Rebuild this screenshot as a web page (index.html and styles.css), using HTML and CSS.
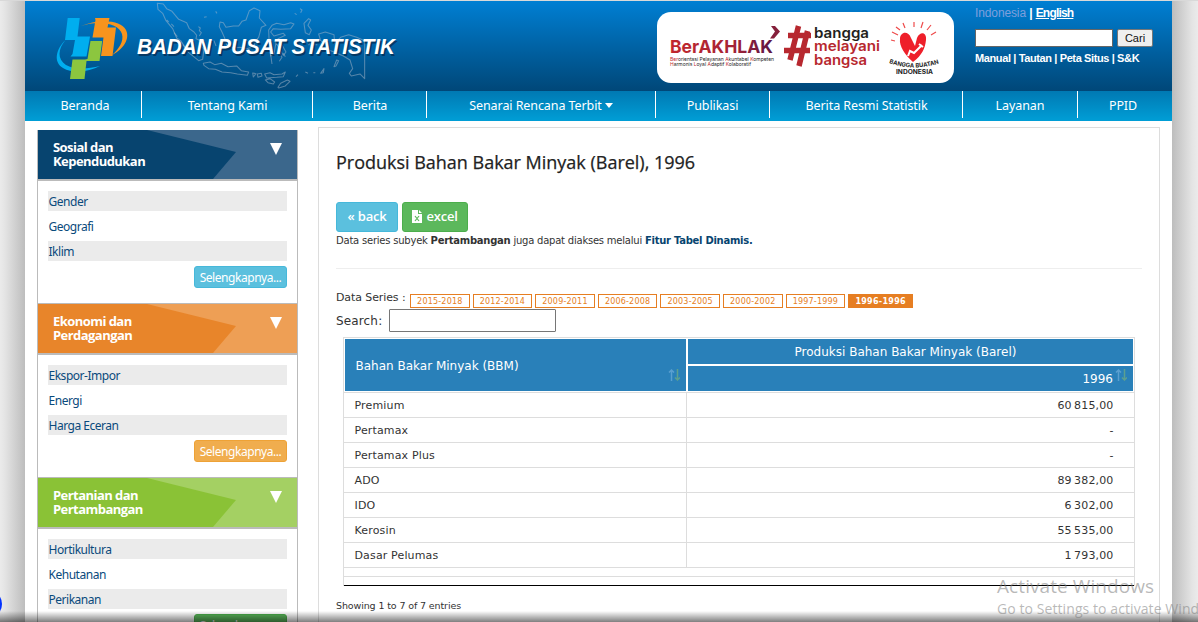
FILE: index.html
```
<!DOCTYPE html>
<html lang="id">
<head>
<meta charset="utf-8">
<title>Badan Pusat Statistik</title>
<link rel="stylesheet" href="styles.css">
</head>
<body>
<div class="page">
  <header class="header">
    <svg class="brand" width="400" height="90" viewBox="25 1 400 90">
      <g transform="translate(150 0) scale(.3333)" fill="none" stroke="#a9b9cb" stroke-opacity=".5" stroke-width="3.200" stroke-linejoin="round">
        <path d="M22 10l18 2 10 14 16 8 20 24 24 10 8 18 14 10 8 10-2 10 14 6-2 16 12 8-4 32-12 4-30-24-24-36-12-8-12-28-20-24-10-22-14-12z"/>
        <path d="M160 190l20-4 14 8 20-4 20 10 26-2 14 14 22 4-4 10-30-4-20-4-26-2-20-8-20-2-14-10zM308 219l10 2-8 10zM322 222l12-2 2 8-12 4zM344 222l16-4 12 6 24-2 10-6-6 14-20 2-30 2zM346 240l14-4 14 10-4 6-16-4zM384 262l8-12 20-10 8 4-14 14-20 6z"/>
        <path d="M210 66l10 2 8 14 22-4 16 0 10-14 12-4 10-28 14-8 18 8-2 22 20 22-14 6-8 30-8 10-8 18-20 6-20-4-20 2-20-10-6-20-8-18-8-16z"/>
        <path d="M356 90l10-14 14-6 22 4 20-6 10 4-10 14-30 2-22-2-8 10 10 12 28-8 6 6-22 10 14 22 10 18-8 10-14-24-8-14-6 34-10 6-4-30z"/>
        <path d="M462 70l14-14 6 4-8 16 10 14-6 14-12-6zM506 102l20-6 26 8 2 26 18-18 24-8 24 8 24 10v114l-14-14-26 6-6-8 10-14-8-26-20-12-22-10-22-8-4-16-20-12zM470 122l10 6-4 8M490 134l12 0"/>
        <path d="M50 60l6 6M64 72l8 8M72 98l10 12M98 134l14 16M145 80l6 4-3 8 6 6-6 10M197 34l4 6M162 52l8-2M192 122l6 16M450 26l6 4-4 8M434 40l6 4M362 164l4 28M388 158l8 14-8 12M400 160l6 10M438 230l6-6M466 216l8 4M490 218l6 0M512 220l10-14-2 12zM552 200l8-20 6 2-8 16z"/>
      </g>
      <path d="M80 26.500C99 18 121 20 126 30c5 11-6 21-14 25 7-6 12-14 10-21-3-11-25-14-42-7.500z" fill="#f7941e"/>
      <path d="M65.500 40C56 49 53 62 63 68c10 6 26 4 37-2-12 3-26 4-34-1-9-6-8-16-.5-25z" fill="#00aeef"/>
      <path d="M67.700 18h12l-2.200 18.500h12.500L86.500 56.500H70.500L72.500 54l2.500-14H65z" fill="#00aeef"/>
      <path d="M95 18h14.500l-2 9.500h8.500L112.500 56H101l2.500-18.500H92.500L95.500 20z" fill="#f7941e"/>
      <path d="M90.500 41h11.700L99.500 61H86.500L84.500 79H70l2.500-19.500h12.500L87.500 59z" fill="#8cc63f"/>
      <text class="brand-shadow" x="138.500" y="56" textLength="258" lengthAdjust="spacingAndGlyphs" aria-hidden="true">BADAN PUSAT STATISTIK</text>
      <text class="brand-name" x="137" y="54" textLength="258" lengthAdjust="spacingAndGlyphs">BADAN PUSAT STATISTIK</text>
    </svg>
    <svg class="campaign" width="297" height="71" viewBox="0 0 297 71">
      <defs><linearGradient id="maroon"><stop offset="0" stop-color="#c1272d"/><stop offset=".6" stop-color="#a62335"/><stop offset="1" stop-color="#5b1645"/></linearGradient></defs>
      <rect width="297" height="71" rx="14" fill="#fff"/>
      <text x="13" y="40.500" class="akhlak" textLength="103" lengthAdjust="spacingAndGlyphs" fill="url(#maroon)">BerAKHLAK</text>
      <path d="M114 14h4l5 5.500-6 7h-4l5-7z" fill="#85203b"/>
      <text x="13" y="48.500" class="tiny" textLength="104" lengthAdjust="spacingAndGlyphs"><tspan fill="#c1272d">Ber</tspan>orientasi Pelayanan <tspan fill="#c1272d">A</tspan>kuntabel <tspan fill="#c1272d">K</tspan>ompeten</text>
      <text x="13" y="54" class="tiny" textLength="81" lengthAdjust="spacingAndGlyphs"><tspan fill="#c1272d">H</tspan>armonis <tspan fill="#c1272d">L</tspan>oyal <tspan fill="#c1272d">A</tspan>daptif <tspan fill="#c1272d">K</tspan>olaboratif</text>
      <path d="M141.500 14L133 48M150.500 19L142 54M131 23.500h23M127 38.500h26" fill="none" stroke="#b7282f" stroke-width="5.500"/>
      <text x="157" y="25.500" class="pop" fill="#231f20" textLength="55" lengthAdjust="spacingAndGlyphs">bangga</text>
      <text x="157" y="39" class="pop" fill="#b7282f" textLength="66" lengthAdjust="spacingAndGlyphs">melayani</text>
      <text x="157" y="52.500" class="pop" fill="#b7282f" textLength="53" lengthAdjust="spacingAndGlyphs">bangsa</text>
      <path d="M256 50C248 43 242 34 243 27c0-7 8-9 11-1l4 8 2-8c3-7 10-6 9 2-1 9-4 15-13 22z" fill="#ee1f2a"/>
      <path d="M251 44l2-5 4 2 8-8M262 32l4 3" fill="none" stroke="#fff" stroke-width="2"/>
      <path d="M235 20l6 3M234 28l4 1M239 15l4 3M246 11l2 5M257 10v5M264 16l2-6M270 18l4-5M274 23l5-3" fill="none" stroke="#ee4a4a" stroke-width="1.200"/>
      <path id="arc" d="M232 51q25 9 51 0" fill="none"/>
      <text class="made" textLength="51" lengthAdjust="spacingAndGlyphs"><textPath href="#arc">BANGGA BUATAN</textPath></text>
      <text class="made" x="239" y="61.500" textLength="37" lengthAdjust="spacingAndGlyphs">INDONESIA</text>
    </svg>
    <div class="tools">
      <div class="lang"><span class="muted">Indonesia</span> <b>|</b> <b class="under">English</b></div>
      <div class="find"><input class="find-box" aria-label="Cari"><button class="find-btn">Cari</button></div>
      <div class="quick">Manual | Tautan | Peta Situs | S&amp;K</div>
    </div>
  </header>
  <nav class="nav">
    <a>Beranda</a><a>Tentang Kami</a><a>Berita</a><a>Senarai Rencana Terbit<i class="caret"></i></a><a>Publikasi</a><a>Berita Resmi Statistik</a><a>Layanan</a><a>PPID</a>
  </nav>
  <div class="body">
    <aside class="side">
      <section class="box navy">
        <h2><span>Sosial dan<br>Kependudukan</span><i class="tri"></i></h2>
        <ul><li>Gender</li><li>Geografi</li><li>Iklim</li></ul>
        <a class="more">Selengkapnya...</a>
      </section>
      <section class="box orange">
        <h2><span>Ekonomi dan<br>Perdagangan</span><i class="tri"></i></h2>
        <ul><li>Ekspor-Impor</li><li>Energi</li><li>Harga Eceran</li></ul>
        <a class="more">Selengkapnya...</a>
      </section>
      <section class="box green">
        <h2><span>Pertanian dan<br>Pertambangan</span><i class="tri"></i></h2>
        <ul><li>Hortikultura</li><li>Kehutanan</li><li>Perikanan</li></ul>
        <a class="more">Selengkapnya...</a>
      </section>
    </aside>
    <main class="main">
      <h1><span>Produksi Bahan Bakar Minyak (Barel), 1996</span></h1>
      <div class="actions">
        <a class="btn info">« back</a>
        <a class="btn success"><svg width="10" height="13" viewBox="0 0 10 13"><path d="M0 0h6v4h4v9H0zM7 0l3 3H7z" fill="#fff"/><path d="M3 6l4 5M7 6l-4 5" stroke="#5cb85c" stroke-width="1.200"/></svg>excel</a>
      </div>
      <p class="note"><span>Data series subyek <b>Pertambangan</b> juga dapat diakses melalui <b class="link">Fitur Tabel Dinamis.</b></span></p>
      <hr>
      <div class="series"><span class="label">Data Series :</span><a>2015-2018</a><a>2012-2014</a><a>2009-2011</a><a>2006-2008</a><a>2003-2005</a><a>2000-2002</a><a>1997-1999</a><a class="on">1996-1996</a></div>
      <div class="search"><label>Search:</label><input aria-label="Search"></div>
      <div class="table">
        <div class="thead">
          <div class="th first">Bahan Bakar Minyak (BBM)<svg class="sort" width="12" height="12"><path d="M3.500 12V2M1 3.500L3.500 1 6 3.500" stroke="#5a9fd0" stroke-width="1.500"/><path d="M9.500 0v10M7 8.500L9.500 11 12 8.500" stroke="#5c9f90" stroke-width="1.500"/></svg></div>
          <div class="th group">Produksi Bahan Bakar Minyak (Barel)</div>
          <div class="th year">1996<svg class="sort" width="12" height="12"><path d="M3.500 12V2M1 3.500L3.500 1 6 3.500" stroke="#5a9fd0" stroke-width="1.500"/><path d="M9.500 0v10M7 8.500L9.500 11 12 8.500" stroke="#5c9f90" stroke-width="1.500"/></svg></div>
        </div>
        <div class="row"><span>Premium</span><span>60&#8201;815,00</span></div>
        <div class="row"><span>Pertamax</span><span>-</span></div>
        <div class="row"><span>Pertamax Plus</span><span>-</span></div>
        <div class="row"><span>ADO</span><span>89&#8201;382,00</span></div>
        <div class="row"><span>IDO</span><span>6&#8201;302,00</span></div>
        <div class="row"><span>Kerosin</span><span>55&#8201;535,00</span></div>
        <div class="row"><span>Dasar Pelumas</span><span>1&#8201;793,00</span></div>
        <div class="foot"></div>
        <div class="foot last"></div>
      </div>
      <p class="info-line">Showing 1 to 7 of 7 entries</p>
    </main>
  </div>
</div>
<div class="fade"></div>
<div class="dot"></div>
<div class="watermark"><div class="wm1">Activate Windows</div><div class="wm2">Go to Settings to activate Windows.</div></div>
</body>
</html>
```
FILE: styles.css
```
* { box-sizing: border-box; }
body {
  margin: 0; height: 622px; overflow: hidden; position: relative;
  background: linear-gradient(90deg, #ebebeb 0, #e4e4e4 5px, #bdbdbd 25px, #bdbdbd 1172px, #e4e4e4 1192px, #ebebeb 1198px);
  border-top: 1px solid #d9d9d9;
  font-family: "DejaVu Sans", Verdana, sans-serif; color: #333;
}
.page { width: 1147px; height: 621px; margin-left: 25px; background: #fff; overflow: hidden; }
.header { height: 90px; display: flex; align-items: flex-start; background: linear-gradient(#007fd3, #004778); }
.brand { flex: none; }
.brand-name, .brand-shadow { font: italic bold 22px "Liberation Sans", Arial, sans-serif; fill: #fff; }
.brand-shadow { fill: #07284c; opacity: .7; }
.campaign { margin: 11px 0 0 232px; flex: none; }
.akhlak { font: bold 18px Inter, sans-serif; }
.tiny { font: 5px Inter, sans-serif; fill: #222; }
.pop { font: 600 14px Inter, sans-serif; }
.made { font: bold 6px Inter, sans-serif; fill: #222; }
.tools { margin-left: 21px; color: #fff; font-family: "Liberation Sans", Arial, sans-serif; }
.lang { font-size: 12px; line-height: 14px; margin-top: 5px; white-space: nowrap; letter-spacing: -.12px; }
.muted { color: #7f9fdc; }
.under { text-decoration: underline; font-weight: 700; letter-spacing: -.8px; }
.find { display: flex; gap: 4px; margin-top: 9px; }
.find-box { width: 138px; height: 18px; border: 1px solid #666; background: #fff; padding: 0; }
.find-btn { width: 36px; height: 18px; border: 1px solid #777; border-radius: 2px; background: #efefef; padding: 0; font: 11px "Liberation Sans", Arial, sans-serif; color: #111; }
.quick { margin-top: 4px; font-size: 11px; line-height: 14px; font-weight: 700; letter-spacing: -.38px; white-space: nowrap; }

.nav { height: 30px; display: grid; grid-template-columns: 117px 171px 114px 229px 114px 193px 115px 94px; background: linear-gradient(#0079b3, #009ed6); }
.nav a { height: 27px; border-right: 1px solid #fff; color: #fff; font: 12.500px/30px "Noto Sans", sans-serif; letter-spacing: -.08px; text-align: center; padding-left: 1px; white-space: nowrap; }
.nav a:first-child { padding-left: 4px; }
.nav a:nth-child(4), .nav a:nth-child(5), .nav a:nth-child(7) { padding-left: 0; }
.nav a:last-child { border: 0; padding: 0 4px 0 0; }
.caret { display: inline-block; border: 4.500px solid transparent; border-top: 5px solid #fff; border-bottom: 0; margin: 0 0 2px 3px; }

.body { display: flex; align-items: flex-start; }
.side { width: 261px; margin: 9px 0 0 12px; border: solid #bbb; border-width: 0 1px; }
.box { height: 174px; border-bottom: 1px solid #bbb; }
.box h2 {
  margin: 0; height: 51px; border-bottom: 2px solid #bbb; padding: 10px 15px 0 15px; display: flex; justify-content: space-between;
  font: 700 13px/14px "Open Sans", sans-serif; letter-spacing: -.55px; color: #fff; position: relative;
}
.box h2::before { content: ""; position: absolute; inset: 0; background: var(--dark); clip-path: polygon(0 0, 109px 0, 198px 22px, 175px 100%, 0 100%); }
.box h2 > * { position: relative; }
.navy h2 { background: #3b678c; --dark: #07446f; }
.orange h2 { background: #ee9f55; --dark: #e8852a; }
.green h2 { background: #a4d063; --dark: #8ac236; }
.tri { height: 0; border: 6px solid transparent; border-top: 12px solid #fff; border-bottom: 0; margin-top: 3px; }
.box ul { list-style: none; margin: 10px 10px 5px; padding: 0; display: grid; gap: 5px; }
.box li { height: 20px; font: 12px/21px "Noto Sans", sans-serif; letter-spacing: -.48px; color: #0a4a7c; padding-left: .5px; }
.box li:nth-child(odd) { background: #ebebeb; }
.more { display: block; width: 93px; height: 22px; margin-left: auto; margin-right: 10px; border-radius: 3px; border: 1px solid #46b8da; background: #5bc0de; color: #fff; font: 12px/22px "Noto Sans", sans-serif; letter-spacing: -.45px; text-align: center; white-space: nowrap; }
.orange .more { background: #f0ad4e; border-color: #eea236; }
.green .more { background: #5cb85c; border-color: #4cae4c; }

.main { width: 842px; height: 600px; margin: 6px 0 0 20px; border: 1px solid #ddd; padding: 0 17px; }
.main h1 { margin: 22px 0 0; font: 18px/24px "Open Sans", sans-serif; letter-spacing: -.01px; color: #222; -webkit-text-stroke: .25px #222; white-space: nowrap; }
.actions { display: flex; gap: 4px; margin-top: 28px; }
.btn { height: 30px; border: 1px solid; border-radius: 3px; color: #fff; font: 600 13px/27px "Open Sans", sans-serif; text-align: center; letter-spacing: -.2px; white-space: nowrap; }
.info { width: 62px; background: #5bc0de; border-color: #46b8da; }
.success { width: 66px; background: #5cb85c; border-color: #4cae4c; }
.btn svg { vertical-align: -2px; margin-right: 4px; }
.note { margin: 2px 0 0; font-size: 10px; line-height: 14px; letter-spacing: -.22px; white-space: nowrap; }
.note b { letter-spacing: -.27px; }
.link { color: #07446f; }
.main hr { border: 0; border-top: 1px solid #eee; margin: 20px 0 25px; }
.series { display: flex; height: 15px; gap: 3px; white-space: nowrap; }
.series .label { width: 71px; font-size: 11px; line-height: 8px; letter-spacing: -.1px; }
.series a { width: 59.600px; height: 14px; border: 1px solid #e67e22; color: #e67e22; font-size: 8px; line-height: 13px; text-align: center; letter-spacing: .2px; }
.series .on { width: 65px; background: #e67e22; color: #fff; font-weight: 700; letter-spacing: .3px; }
.search { display: flex; font-size: 12px; line-height: 25px; height: 23px; }
.search label { width: 53px; letter-spacing: .15px; }
.search input { width: 167px; height: 23px; border: 1px solid #767676; border-radius: 1px; padding: 0; }
.table { width: 792px; margin: 5px 0 0 7px; border: 1px solid #ddd; border-bottom: 0; font-size: 11px; }
.thead { height: 55px; padding: 1px; border-bottom: 1px solid #ddd; display: grid; grid-template: 25px 25px / 341px 1fr; gap: 2px; }
.th { background: #2980b9; color: #fff; font-size: 12px; line-height: 27px; position: relative; white-space: nowrap; }
.first { grid-row: 1 / 3; padding-left: 10.500px; line-height: 55px; }
.group { text-align: center; padding-right: 10px; }
.year { text-align: right; padding-right: 20px; }
.sort { position: absolute; right: 6px; top: 30px; fill: none; }
.year .sort { right: 6px; top: 3px; }
.row { height: 25px; border-bottom: 1px solid #ddd; display: grid; grid-template-columns: 343px 1fr; line-height: 25px; }
.row span:first-child { border-right: 1px solid #ddd; padding-left: 10.500px; letter-spacing: .15px; }
.row span:last-child { text-align: right; padding-right: 20.500px; letter-spacing: .15px; }
.foot { height: 9px; border-bottom: 1px solid #ddd; }
.foot.last { border-bottom-color: #000; }
.info-line { margin: 14px 0 0; font-size: 9.500px; line-height: 12px; letter-spacing: -.12px; }

.fade { position: absolute; inset: auto 0 0 0; height: 11px; background: linear-gradient(rgba(0,0,0,0), rgba(0,0,0,.5)); }
.dot { position: absolute; left: -26px; top: 589px; width: 28px; height: 28px; border-radius: 50%; background: #0433ff; }
.watermark { position: absolute; left: 997px; top: 573px; color: rgba(125,125,125,.55); font-family: "Open Sans", sans-serif; white-space: nowrap; }
.wm1 { font-size: 19px; line-height: 24px; letter-spacing: .08px; }
.wm2 { font-size: 14px; line-height: 21px; letter-spacing: .08px; }
```
